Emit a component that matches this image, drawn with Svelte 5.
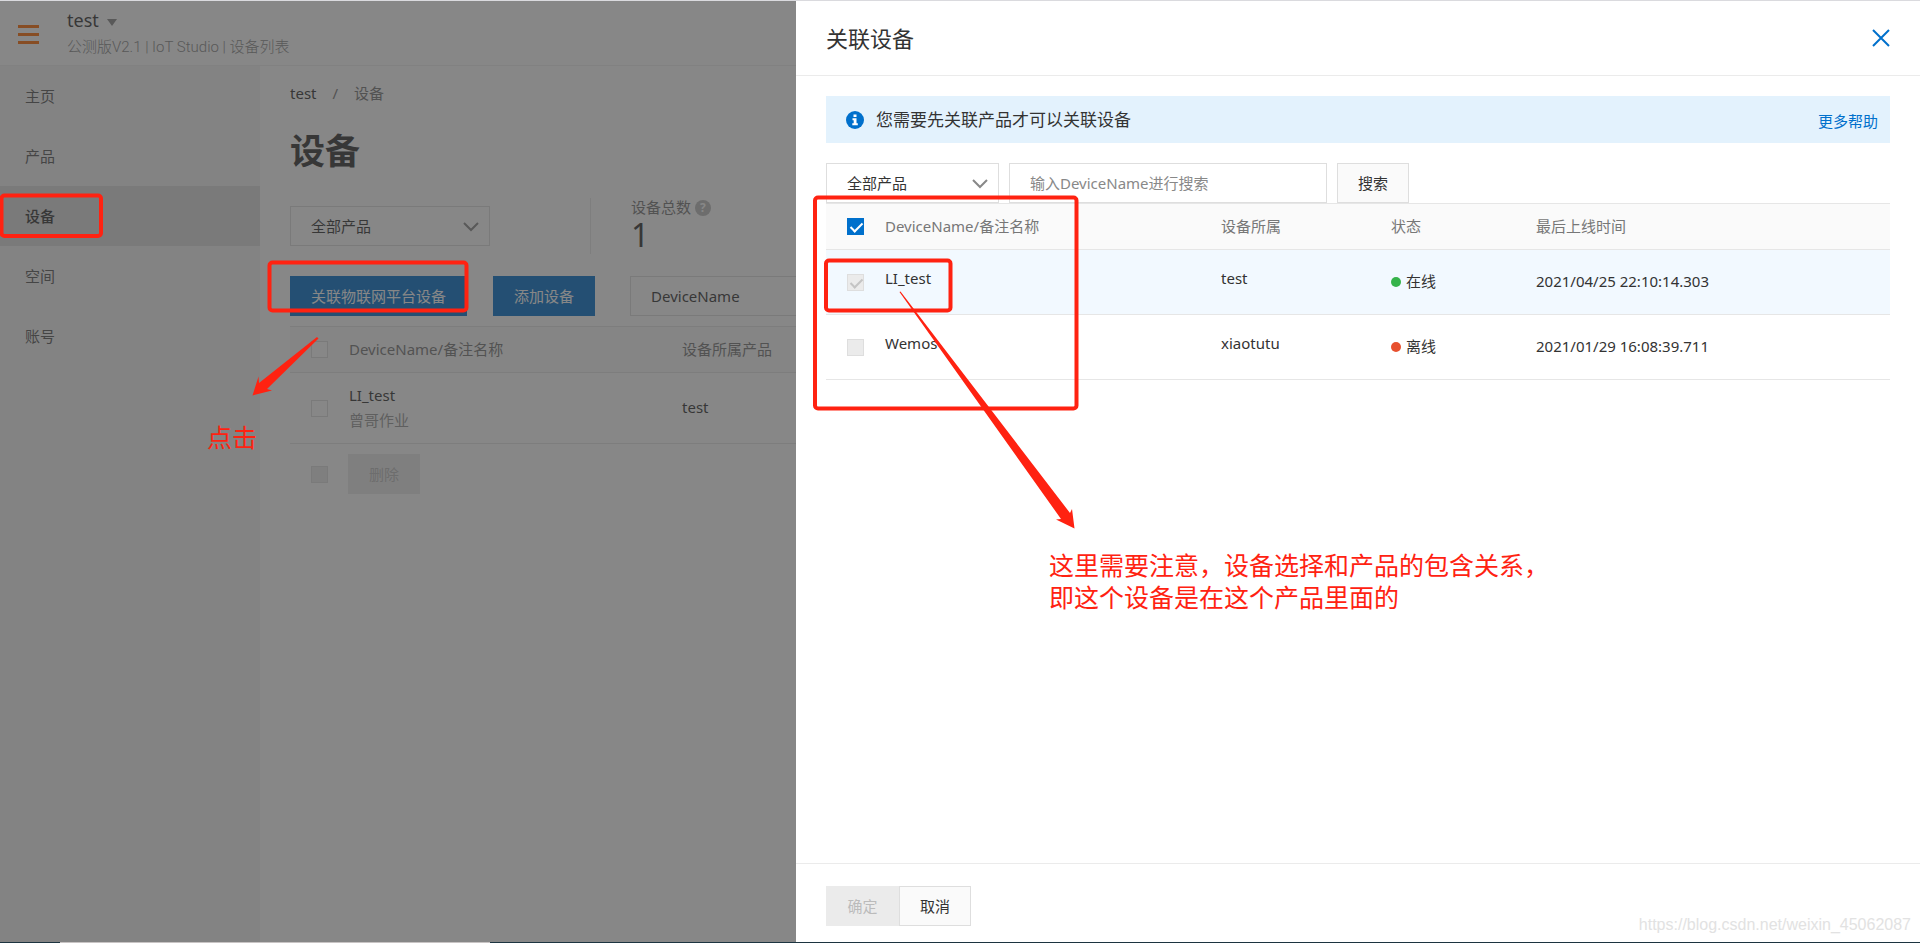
<script>
    let menus = ['主页', '产品', '设备', '空间', '账号']
    let activeMenu = '设备'

    let devices = [
        { name: 'LI_test', product: 'test', online: true, time: '2021/04/25 22:10:14.303', checked: true },
        { name: 'Wemos', product: 'xiaotutu', online: false, time: '2021/01/29 16:08:39.711', checked: false }
    ]

    function selectMenu(menu) {
        activeMenu = menu
    }
</script>

<div class="app">
    <header class="topbar">
        <button class="burger" aria-label="菜单"><i></i><i></i><i></i></button>
        <div>
            <div class="project">test <span class="caret"></span></div>
            <div class="version">公测版V2.1 | IoT Studio | 设备列表</div>
        </div>
    </header>

    <div class="body">
        <nav class="sidebar">
            {#each menus as menu}
                <button class="menu" class:active={menu === activeMenu} on:click={() => selectMenu(menu)}>{menu}</button>
            {/each}
        </nav>

        <main class="content">
            <div class="crumbs"><a href="#home">test</a><span>/</span><span>设备</span></div>
            <h1>设备</h1>

            <div class="summary">
                <div class="selectWrapper productSelect">
                    <select aria-label="产品"><option>全部产品</option></select>
                    <svg viewBox="0 0 16 10"><path d="M1 1l7 7 7-7" /></svg>
                </div>
                <div class="total">
                    <div class="totalLabel">设备总数 <span class="help">?</span></div>
                    <div class="totalNum">1</div>
                </div>
            </div>

            <div class="actions">
                <button class="primary">关联物联网平台设备</button>
                <button class="primary">添加设备</button>
                <div class="selectWrapper nameSelect">
                    <select aria-label="搜索字段"><option>DeviceName</option></select>
                </div>
            </div>

            <table class="pageTable">
                <thead>
                    <tr>
                        <th class="check"><input type="checkbox" aria-label="全选设备"></th>
                        <th class="pageName">DeviceName/备注名称</th>
                        <th>设备所属产品</th>
                    </tr>
                </thead>
                <tbody>
                    <tr>
                        <td class="check"><input type="checkbox" aria-label="LI_test"></td>
                        <td>LI_test<div class="remark">曾哥作业</div></td>
                        <td>test</td>
                    </tr>
                </tbody>
            </table>
            <div class="batch">
                <input type="checkbox" aria-label="批量选择" disabled>
                <button class="disabledBtn" disabled>删除</button>
            </div>
        </main>
    </div>

    <div class="mask"></div>

    <section class="drawer">
        <div class="drawerHeader">
            <h2>关联设备</h2>
            <button class="close" aria-label="关闭">
                <svg viewBox="0 0 18 18"><path d="M1 1l16 16M17 1L1 17" /></svg>
            </button>
        </div>

        <div class="drawerBody">
            <div class="notice">
                <svg class="info" viewBox="0 0 18 18">
                    <circle cx="9" cy="9" r="9" fill="#0070cc" />
                    <path d="M7.500 3.500h3v2.500h-3zM6.500 7.300h4v5h1.300v1.900H6.300v-1.900h1.400V9.200H6.500z" fill="#fff" />
                </svg>
                <span class="noticeText">您需要先关联产品才可以关联设备</span>
                <a href="#help">更多帮助</a>
            </div>

            <div class="filters">
                <div class="selectWrapper drawerSelect">
                    <select aria-label="产品筛选"><option>全部产品</option></select>
                    <svg viewBox="0 0 16 10"><path d="M1 1l7 7 7-7" /></svg>
                </div>
                <input class="search" type="text" aria-label="设备名称" placeholder="输入DeviceName进行搜索">
                <button class="normal">搜索</button>
            </div>

            <table class="drawerTable">
                <thead>
                    <tr>
                        <th class="check"><input type="checkbox" aria-label="全选" checked></th>
                        <th class="name">DeviceName/备注名称</th>
                        <th class="belong">设备所属</th>
                        <th class="status">状态</th>
                        <th>最后上线时间</th>
                    </tr>
                </thead>
                <tbody>
                    {#each devices as { name, product, online, time, checked }}
                        <tr class:selected={checked}>
                            <td class="check"><input type="checkbox" aria-label={name} {checked} disabled></td>
                            <td class="raised">{name}</td>
                            <td class="raised">{product}</td>
                            <td><span class="dot" class:online></span>{online ? '在线' : '离线'}</td>
                            <td>{time}</td>
                        </tr>
                    {/each}
                </tbody>
            </table>
        </div>

        <div class="drawerFooter">
            <button class="disabledBtn" disabled>确定</button>
            <button class="normal">取消</button>
        </div>
    </section>

    <div class="taskbar"><i></i></div>

    <!-- hand-drawn notes on top of the page -->
    <svg class="marks" width="1920" height="943" viewBox="0 0 1920 943">
        <g fill="none" stroke="#ff2211" stroke-width="4">
            <rect x="1.500" y="195.500" width="99.500" height="40.500" rx="3" />
            <rect x="269.500" y="262.500" width="197" height="48" rx="3" />
            <rect x="815" y="197.500" width="261.500" height="211" rx="3" />
            <rect x="826" y="260.500" width="124.500" height="50" rx="3" />
        </g>
        <g fill="#ff2211">
            <path d="M317 337l-58 46-0.500-6.500-6 19 19.500-5-5-1.500 51.500-50.500z" />
            <path d="M899.500 292l161.500 227-5 0.500 18.500 9-2.500-19.500-2 4-169.500-221.500z" />
        </g>
    </svg>
    <p class="note noteClick">点击</p>
    <p class="note noteRelation">这里需要注意，设备选择和产品的包含关系，<br>即这个设备是在这个产品里面的</p>
    <span class="watermark">https://blog.csdn.net/weixin_45062087</span>
</div>

<style>
    :global(body) {
        margin: 0;
        overflow: hidden;
    }
    .app {
        position: relative;
        display: flex;
        flex-direction: column;
        min-height: 100vh;
        box-sizing: border-box;
        border-top: 1px solid #dadade;
        background: #fff;
        color: #333;
        font: 15px/20px "Noto Sans", "Noto Sans CJK SC", sans-serif;
        overflow: hidden;
    }
    .app * {
        box-sizing: border-box;
    }
    button, input, select {
        font: inherit;
        color: inherit;
        margin: 0;
        border-radius: 0;
    }
    button {
        border: none;
        background: none;
        padding: 0;
        cursor: pointer;
    }
    a {
        color: #0070cc;
        text-decoration: none;
    }

    /* top bar */
    .topbar {
        display: flex;
        align-items: center;
        height: 65px;
        padding: 2px 0 0 18px;
        gap: 28px;
        border-bottom: 1px solid #f0f0f0;
    }
    .burger {
        display: flex;
        flex-direction: column;
        gap: 5px;
        width: 21px;
    }
    .burger i {
        height: 3px;
        background: #ff6a00;
    }
    .project {
        font-size: 18px;
        line-height: 26px;
    }
    .caret {
        display: inline-block;
        margin-left: 4px;
        border: 5px solid transparent;
        border-top: 7px solid #888;
        border-bottom: 0;
        vertical-align: 1px;
    }
    .version {
        line-height: 28px;
        color: #888;
        font-family: Roboto, "Noto Sans CJK SC", sans-serif;
        font-weight: 300;
    }

    .body {
        display: flex;
        flex: 1;
    }
    .sidebar {
        width: 260px;
        flex: none;
        background: #f5f5f5;
    }
    .menu {
        display: block;
        width: 100%;
        height: 60px;
        padding-left: 25px;
        text-align: left;
        color: #555;
    }
    .active {
        background: #dedede;
        color: #333;
        font-weight: 500;
    }

    /* device page */
    .content {
        flex: 1;
        padding: 16px 30px;
    }
    .crumbs {
        display: flex;
        gap: 16px;
        color: #777;
        line-height: 22px;
    }
    .crumbs a {
        color: #333;
    }
    h1 {
        margin: 22px 0 21px;
        font-size: 35px;
        line-height: 50px;
        font-weight: 700;
    }
    .summary {
        display: flex;
        align-items: center;
        height: 57px;
    }
    .selectWrapper {
        position: relative;
    }
    .selectWrapper select {
        appearance: none;
        width: 100%;
        height: 40px;
        padding: 0 20px;
        border: 1px solid #dedede;
        background: #fff;
    }
    .selectWrapper svg {
        position: absolute;
        right: 11px;
        top: 16px;
        width: 16px;
        height: 10px;
        fill: none;
        stroke: #888;
        stroke-width: 2;
        pointer-events: none;
    }
    .productSelect {
        width: 200px;
    }
    .total {
        margin-left: 100px;
        padding-left: 40px;
        border-left: 1px solid #e8e8e8;
    }
    .totalLabel {
        color: #777;
        line-height: 18px;
    }
    .help {
        display: inline-block;
        width: 16px;
        height: 16px;
        border-radius: 50%;
        background: #bbb;
        color: #fff;
        font-size: 12px;
        font-weight: 700;
        line-height: 16px;
        text-align: center;
        vertical-align: 1px;
    }
    .totalNum {
        font-size: 32px;
        line-height: 38px;
    }
    .actions {
        display: flex;
        margin: 22px 0 10px;
    }
    .primary {
        height: 40px;
        padding: 0 21px;
        margin-right: 26px;
        background: #0070cc;
        color: #fff;
    }
    .nameSelect {
        flex: 1;
        margin-left: 9px;
    }

    table {
        width: 100%;
        border-collapse: collapse;
        table-layout: fixed;
    }
    th, td {
        padding: 0 0 2px;
        text-align: left;
        border-bottom: 1px solid #e6e6e6;
    }
    th {
        height: 46px;
        border-top: 1px solid #e6e6e6;
        background: #fafafa;
        color: #777;
        font-weight: 400;
    }
    .check {
        width: 59px;
        padding: 0 0 0 21px;
    }
    input[type="checkbox"] {
        appearance: none;
        position: relative;
        display: block;
        width: 17px;
        height: 17px;
        border: 1px solid #dedede;
        background: #fff;
    }
    input[type="checkbox"]:disabled {
        background: #ebebeb;
    }
    input[type="checkbox"]:checked:not(:disabled) {
        background: #0070cc;
        border-color: #0070cc;
    }
    input[type="checkbox"]:checked::after {
        content: '';
        position: absolute;
        left: 5px;
        top: 1px;
        width: 5px;
        height: 10px;
        border: solid #fff;
        border-width: 0 2px 2px 0;
        transform: rotate(45deg);
    }
    input[type="checkbox"]:checked:disabled::after {
        border-color: #c4c4c4;
    }
    .pageTable td {
        height: 71px;
    }
    .pageName {
        width: 333px;
    }
    .remark {
        margin-top: 5px;
        color: #999;
    }
    .batch {
        display: flex;
        align-items: center;
        gap: 20px;
        padding: 10px 0 0 21px;
    }
    .disabledBtn {
        width: 72px;
        height: 40px;
        background: #ebebeb;
        color: #bbb;
    }

    .mask {
        position: absolute;
        inset: 0;
        background: rgba(59, 59, 59, 0.61);
    }

    /* drawer */
    .drawer {
        position: absolute;
        top: 0;
        right: 0;
        bottom: 0;
        width: calc(100% - 796px);
        display: flex;
        flex-direction: column;
        background: #fff;
    }
    .drawerHeader {
        display: flex;
        align-items: center;
        justify-content: space-between;
        height: 75px;
        padding: 0 30px;
        border-bottom: 1px solid #ebebeb;
    }
    h2 {
        margin: 0;
        font-size: 22px;
        line-height: 30px;
        font-weight: 400;
    }
    .close {
        width: 18px;
        height: 18px;
    }
    .close svg {
        display: block;
        stroke: #0070cc;
        stroke-width: 2;
    }
    .drawerBody {
        flex: 1;
        padding: 20px 30px;
    }
    .notice {
        display: flex;
        align-items: center;
        height: 47px;
        padding: 0 12px 0 20px;
        background: #e3f2fd;
    }
    .info {
        width: 18px;
        height: 18px;
    }
    .noticeText {
        flex: 1;
        margin-left: 12px;
        font-size: 17px;
    }
    .notice a {
        padding-top: 3px;
    }
    .filters {
        display: flex;
        gap: 10px;
        margin-top: 20px;
    }
    .drawerSelect {
        width: 173px;
    }
    .search {
        width: 318px;
        height: 40px;
        padding: 0 20px;
        border: 1px solid #dedede;
        outline: none;
    }
    .search::placeholder {
        color: #888;
    }
    .normal {
        width: 72px;
        height: 40px;
        border: 1px solid #dedede;
        background: #fafafa;
    }
    .drawerTable td {
        height: 65px;
    }
    .drawerTable .name {
        width: 336px;
    }
    .drawerTable .belong {
        width: 170px;
    }
    .drawerTable .status {
        width: 145px;
    }
    .drawerTable .raised {
        padding-bottom: 8px;
    }
    .selected {
        background: #f2f9ff;
    }
    .dot {
        display: inline-block;
        width: 10px;
        height: 10px;
        margin-right: 5px;
        border-radius: 50%;
        background: #e7502e;
    }
    .dot.online {
        background: #35b34a;
    }
    .drawerFooter {
        display: flex;
        height: 80px;
        padding: 22px 30px 0;
        border-top: 1px solid #ebebeb;
    }
    .drawerFooter .disabledBtn {
        width: 73px;
    }

    .taskbar {
        position: absolute;
        left: 0;
        right: 0;
        bottom: 0;
        height: 1px;
        padding-left: 60px;
        background: #1c3440;
    }
    .taskbar i {
        display: block;
        width: 430px;
        height: 1px;
        background: #c8c4c4;
    }

    /* notes */
    .marks {
        position: absolute;
        left: 0;
        top: -1px;
        pointer-events: none;
    }
    .note {
        position: absolute;
        margin: 0;
        color: #ff2211;
        font-size: 25px;
        line-height: 32px;
        white-space: nowrap;
    }
    .noteClick {
        left: 207px;
        top: 420px;
    }
    .noteRelation {
        left: 1049px;
        top: 548px;
    }
    .watermark {
        position: absolute;
        right: 9px;
        bottom: 8px;
        color: #e2e2e2;
        font: 16px/20px "Liberation Sans", Arial, sans-serif;
    }
</style>
